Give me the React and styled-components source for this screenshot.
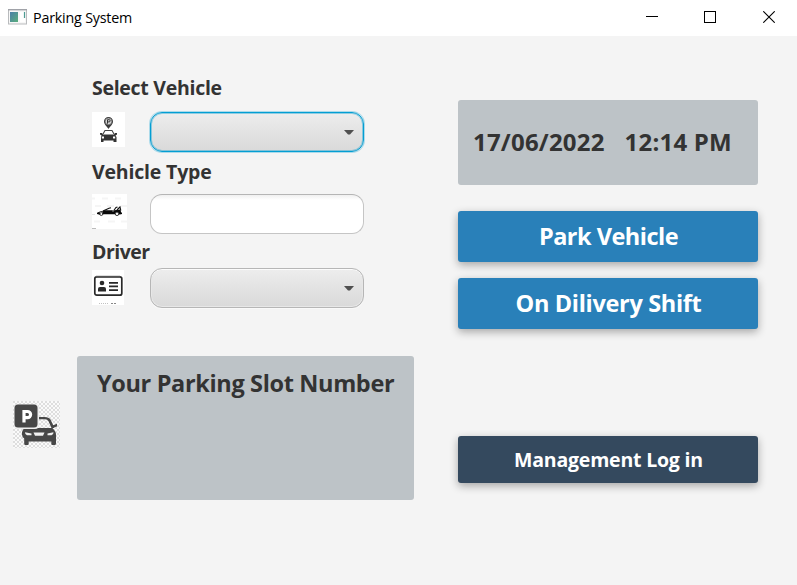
import React from "react";
import styled, { createGlobalStyle, css } from "styled-components";

const GlobalStyle = createGlobalStyle`
  * { box-sizing: border-box; }
  body {
    margin: 0;
    overflow: hidden;
    background: #f4f4f4;
    font-family: "Open Sans", "Noto Sans", sans-serif;
  }
`;

const Window = styled.div`
  display: flex;
  flex-direction: column;
  width: 797px;
  height: 585px;
  background: #f4f4f4;
`;

const TitleBar = styled.header`
  display: flex;
  align-items: center;
  flex: 0 0 36px;
  padding-left: 8px;
  background: #fff;
`;

const AppIcon = styled.svg`
  display: block;
  width: 19px;
  height: 16px;
  margin: 0 6px 2px 0;
`;

const WindowTitle = styled.h1`
  flex: 1;
  margin: 0;
  color: #000;
  font-size: 14.3px;
  font-weight: 400;
  line-height: 36px;
  letter-spacing: -0.2px;
`;

const WindowControls = styled.div`
  display: grid;
  grid-template-columns: 58px 59px 12px;
  padding: 0 22px 2px 0;
`;

const ControlIcon = styled.svg`
  display: block;
  width: 12px;
  height: 12px;
`;

const Content = styled.main`
  display: grid;
  grid-template-columns: 414px 300px;
  column-gap: 44px;
  flex: 1;
`;

const FormColumn = styled.section`
  display: flex;
  flex-direction: column;
  padding-top: 40px;
`;

const Form = styled.form`
  display: flex;
  flex-direction: column;
  height: 232px;
  padding-left: 92px;
`;

const Label = styled.label`
  color: #333;
  font-size: 19.5px;
  font-weight: 700;
  line-height: 24px;
  letter-spacing: ${(p) => p.$spacing}px;
`;

const FieldRow = styled.div`
  display: flex;
  align-items: flex-start;
  margin: ${(p) => p.$margin};
`;

const IconCell = styled.div`
  flex: 0 0 58px;
  padding-top: ${(p) => p.$top || 0}px;
`;

const FieldIcon = styled.svg`
  display: block;
  width: ${(p) => p.$width}px;
  height: 35px;
  background: #fff;
`;

const fieldShape = css`
  width: 214px;
  height: 40px;
  border-radius: 12px;
`;

const ComboBox = styled.button`
  ${fieldShape}
  display: flex;
  align-items: center;
  justify-content: flex-end;
  padding: 0 9px 0 0;
  border: 1px solid ${(p) => (p.$focused ? "#039ed3" : "#b6b6b6")};
  background: linear-gradient(#ededed, #d9d9d9);
  box-shadow: ${(p) =>
    p.$focused
      ? "0 0 0 1px rgba(3, 158, 211, 0.3), inset 0 0 0 1px rgba(3, 158, 211, 0.4)"
      : "inset 0 1px 0 #fbfbfb, inset 0 0 0 1px #e7e7e7, 0 1px 0 #f9f9f9"};
`;

const Arrow = styled.svg`
  display: block;
  width: 10px;
  height: 5px;
  margin-top: 1px;
`;

const TextField = styled.input`
  ${fieldShape}
  padding: 0 12px;
  border: 1px solid #c5c5c5;
  border-top-color: #b5b5b5;
  outline: none;
  background: linear-gradient(#f0f0f0, #fff 5px);
`;

const SlotRow = styled.div`
  display: flex;
  align-items: flex-start;
  margin-top: 48px;
  padding-left: 13px;
`;

const SlotIcon = styled.svg`
  display: block;
  width: 47px;
  height: 47px;
  margin: 45px 17px 0 0;
`;

const Panel = styled.div`
  border-radius: 3px;
  background: #bdc3c7;
  color: #333;
  font-size: 24px;
  font-weight: 700;
  line-height: 30px;
`;

const SlotPanel = styled(Panel)`
  width: 337px;
  height: 144px;
  padding: 12px 0 0 20px;
  font-size: 23.5px;
  letter-spacing: -0.35px;
  white-space: nowrap;
`;

const ActionColumn = styled.section`
  display: flex;
  flex-direction: column;
  padding-top: 64px;
`;

const ClockPanel = styled(Panel)`
  display: flex;
  gap: 20px;
  height: 85px;
  margin-bottom: 26px;
  padding: 27px 0 0 15px;
  letter-spacing: 0.2px;
`;

const ActionButton = styled.button`
  height: ${(p) => p.$height || 51}px;
  margin: 0 0 ${(p) => p.$gap || 0}px;
  padding: 0 0 ${(p) => p.$lift || 0}px 1px;
  border: 0;
  border-radius: 3px;
  background: ${(p) => (p.$dark ? "#34495e" : "#2980b9")};
  box-shadow: 0 3px 9px rgba(0, 0, 0, 0.32);
  color: #fff;
  font-family: inherit;
  font-size: ${(p) => p.$size || 23.5}px;
  font-weight: 700;
  line-height: 30px;
  letter-spacing: ${(p) => p.$spacing}px;
`;

const DropArrow = () => (
  <Arrow viewBox="0 0 10 5">
    <path d="M0 0H10L6 4.6H4Z" fill="#505050" />
  </Arrow>
);

export default function App() {
  return (
    <>
      <GlobalStyle />
      <Window>
        <TitleBar>
          <AppIcon viewBox="0 0 19 16">
            <defs>
              <linearGradient id="screen" x1="0" y1="0" x2="1" y2="1">
                <stop offset="0" stopColor="#4a7fa8" />
                <stop offset="1" stopColor="#5aae7c" />
              </linearGradient>
            </defs>
            <rect x="0.5" y="0.5" width="18" height="14.5" fill="#f7f7f7" stroke="#b9bbbd" />
            <path d="M0 0.7H19" stroke="#a0a2a8" strokeWidth="1.4" />
            <rect x="2" y="3" width="8" height="10" fill="url(#screen)" />
            <rect x="12" y="3" width="5" height="10" fill="#fff" />
            <path d="M16.5 3V9" stroke="#4d9b93" strokeWidth="1.2" />
          </AppIcon>
          <WindowTitle>Parking System</WindowTitle>
          <WindowControls>
            <ControlIcon viewBox="0 0 12 12">
              <path d="M0 5.5H12" stroke="#000" />
            </ControlIcon>
            <ControlIcon viewBox="0 0 12 12">
              <rect x="0.5" y="0.5" width="11" height="11" fill="none" stroke="#000" />
            </ControlIcon>
            <ControlIcon viewBox="0 0 12 12">
              <path d="M0.3 0.3L11.7 11.7M11.7 0.3L0.3 11.7" stroke="#000" strokeWidth="1.1" />
            </ControlIcon>
          </WindowControls>
        </TitleBar>

        <Content>
          <FormColumn>
            <Form>
              <Label $spacing={-0.28}>Select Vehicle</Label>
              <FieldRow $margin="12px 0 8px">
                <IconCell>
                  <FieldIcon $width={33} viewBox="0 0 33 35">
                    <path d="M16.5 17C15 14.5 12 12.5 12 9.5A4.5 4.5 0 0 1 21 9.5C21 12.5 18 14.5 16.5 17Z" fill="#3a3a3a" />
                    <circle cx="16.5" cy="9.4" r="3.3" fill="#d8d8d8" stroke="#555" strokeWidth="0.6" />
                    <path d="M15.5 11.7V7.7H17.1A1.1 1.1 0 0 1 17.1 9.9H15.5" fill="none" stroke="#333" />
                    <path d="M11 22L13 18.5H20L22 22" fill="#fff" stroke="#444" strokeWidth="1.1" />
                    <path d="M8 21H10L11 22.5H22L23 21H25V22.5L23.5 23.5L24.5 25V30H21.5V28.5H11.5V30H9V25L9.6 23.5L8 22.5Z" fill="#333" />
                    <path d="M9.8 25.5H12M23.2 25.5H21" stroke="#fff" strokeWidth="1.8" />
                  </FieldIcon>
                </IconCell>
                <ComboBox type="button" aria-label="Select Vehicle" $focused>
                  <DropArrow />
                </ComboBox>
              </FieldRow>
              <Label $spacing={-0.18}>Vehicle Type</Label>
              <FieldRow $margin="10px 0 6px">
                <IconCell>
                  <FieldIcon $width={35} viewBox="0 0 35 35">
                    <path d="M0 4.5H3M10 4.5H16M23 4.5H29M3 12H9M15 12H22M29 12H35M2 27.5H8M16 27.5H23M29 27.5H35" stroke="#f5f5f5" strokeWidth="2" />
                    <path d="M0 34.5H4" stroke="#bbb" />
                    <path d="M0 20.5H3" stroke="#e3e3e3" />
                    <path d="M5 18.8L8 17.6L13 16.3H22L24.5 16L28.5 15.5L29 18L30 19V20L28 20.5L23 20.2H12L8 20.8L5 20Z" fill="#080808" />
                    <path d="M11 17L17 14.2L19 13.8M22 16.3L24 13.5L25.5 13M25 16L28 12.8L28.8 16.5" fill="none" stroke="#111" strokeWidth="1.1" />
                    <circle cx="9.3" cy="20" r="1.5" fill="#f4f4f4" stroke="#111" strokeWidth="0.8" />
                    <circle cx="25" cy="19.8" r="1.8" fill="#f4f4f4" stroke="#111" strokeWidth="0.8" />
                    <path d="M7.5 18.8L11 17.9M20 17H22" stroke="#ddd" strokeWidth="0.6" />
                  </FieldIcon>
                </IconCell>
                <TextField aria-label="Vehicle Type" />
              </FieldRow>
              <Label $spacing={-0.5}>Driver</Label>
              <FieldRow $margin="4px 0 0">
                <IconCell $top={2}>
                  <FieldIcon $width={32} viewBox="0 0 32 35">
                    <rect x="2.8" y="6.8" width="27" height="18.4" rx="2" fill="#fff" stroke="#292929" strokeWidth="1.7" />
                    <path d="M4 6.2H28" stroke="#777" strokeWidth="0.8" />
                    <circle cx="10" cy="13" r="2.3" fill="#292929" />
                    <path d="M6 21.5V19Q6 17 8 17H12Q14 17 14 19V21.5Z" fill="#292929" />
                    <path d="M17 12.8H26M17 16.3H26M17 20.2H26" stroke="#292929" strokeWidth="1.7" />
                    <path d="M7 33.5H17" stroke="#c2c2c2" strokeDasharray="1 1" />
                    <path d="M19 33.5H25" stroke="#888" strokeDasharray="2 1" />
                  </FieldIcon>
                </IconCell>
                <ComboBox type="button" aria-label="Driver">
                  <DropArrow />
                </ComboBox>
              </FieldRow>
            </Form>

            <SlotRow>
              <SlotIcon viewBox="0 0 47 47">
                <defs>
                  <pattern id="checks" width="4" height="4" patternUnits="userSpaceOnUse">
                    <rect width="4" height="4" fill="#fafafa" />
                    <path d="M0 0H2V2H0ZM2 2H4V4H2Z" fill="#dedede" />
                  </pattern>
                </defs>
                <rect width="47" height="47" fill="url(#checks)" />
                <path d="M26 16H31.5Q36 16 37.5 18.5L41.5 27H38.5L35.5 20.2Q34.5 18.3 32 18.3H26Z" fill="#474747" />
                <path d="M39.5 24.5L44 22.8V25.4L40.5 26.5Z" fill="#474747" />
                <path d="M11 27H39.5L41.5 29.5Q43 31.5 43 34V42.5Q43 44 41.5 44H39.5Q38.3 44 38.3 42.5V40.5H15.7V42.5Q15.7 44 14.5 44H12.5Q11.2 44 11.2 42.5V37.5Q9 36 9 33.5V31Z" fill="#474747" />
                <path d="M12 31.2L18.5 32.5V34.2H14Q12 34 12 31.2ZM40.5 31.2L34.5 32.5V34.2H38.5Q40.5 34 40.5 31.2ZM20.5 31.5H31.5L30 34.7H22Z" fill="#f0f0f0" />
                <rect x="1" y="3" width="25" height="25" rx="4" fill="#eee" />
                <rect x="1.5" y="3.5" width="23" height="23" rx="3.5" fill="#474747" />
                <path d="M11 21.5V10.5H14.5A3.1 3.1 0 0 1 14.5 16.7H11" fill="none" stroke="#fff" strokeWidth="3.2" />
              </SlotIcon>
              <SlotPanel>Your Parking Slot Number</SlotPanel>
            </SlotRow>
          </FormColumn>

          <ActionColumn>
            <ClockPanel>
              <span>17/06/2022</span>
              <span>12:14 PM</span>
            </ClockPanel>
            <ActionButton $spacing={-0.5} $gap={16} $lift={2}>Park Vehicle</ActionButton>
            <ActionButton $spacing={-0.32} $gap={107} $lift={2}>On Dilivery Shift</ActionButton>
            <ActionButton $dark $height={47} $size={19.5} $spacing={-0.2}>
              Management Log in
            </ActionButton>
          </ActionColumn>
        </Content>
      </Window>
    </>
  );
}
